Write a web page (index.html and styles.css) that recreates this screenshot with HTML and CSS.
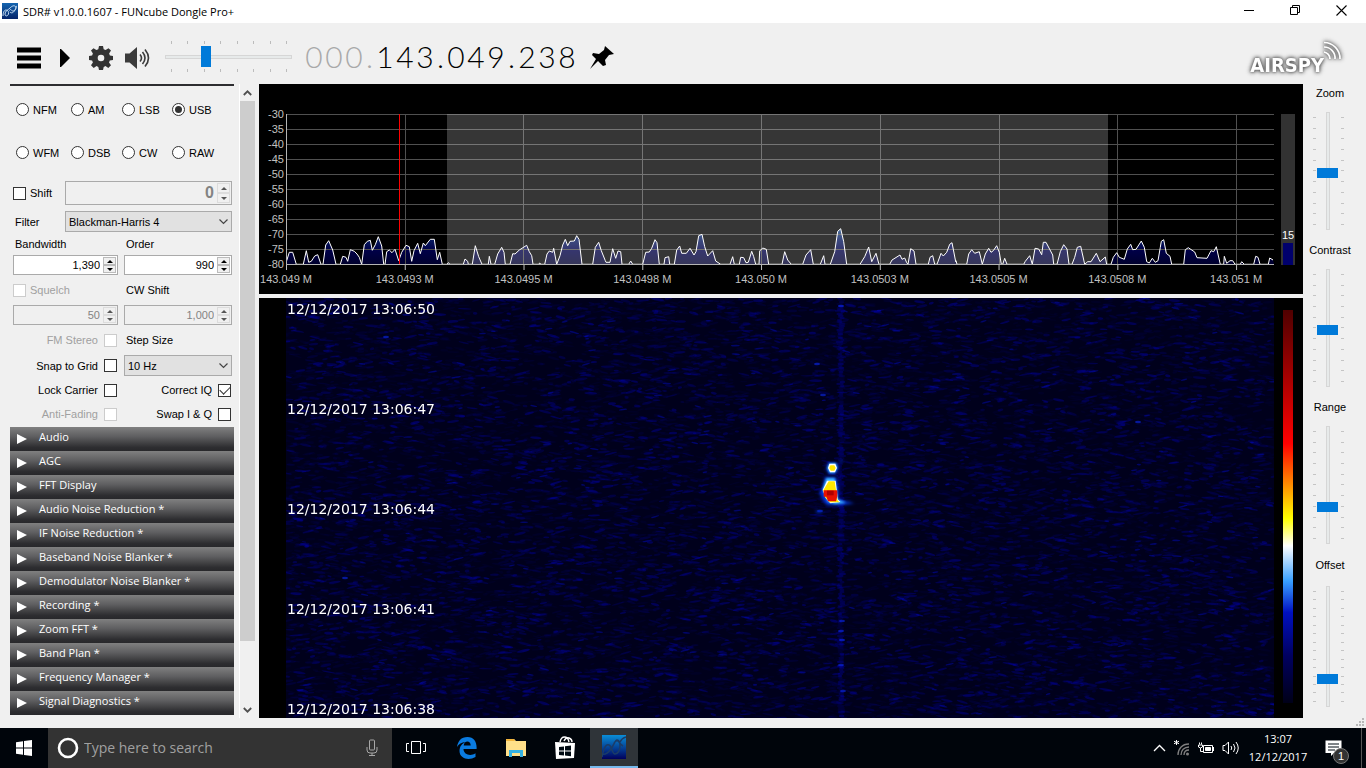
FILE: index.html
```html
<!DOCTYPE html>
<html lang="en">
<head>
<meta charset="utf-8">
<title>SDR# v1.0.0.1607 - FUNcube Dongle Pro+</title>
<link rel="stylesheet" href="styles.css">
</head>
<body>
<header class="titlebar">
  <svg class="app-icon" width="16" height="16" viewBox="0 0 16 16" aria-hidden="true"><defs><linearGradient id="ai" x2="0" y2="1"><stop offset="0" stop-color="#1565b0"/><stop offset="1" stop-color="#04246a"/></linearGradient></defs><rect width="16" height="16" fill="url(#ai)"/><path d="M1 13C1 10 2 7 4 7s3 2 2.500 4S3 14 3 11s3-4 5-6 4-3 5.500-1.500S13 8 11 8 9 5 7.500 7.500M8 9c2 2 4 0 5-2s1-4 2-4" fill="none" stroke="#c8dff5"/></svg>
  <h1 class="title">SDR# v1.0.0.1607 - FUNcube Dongle Pro+</h1>
  <button class="win-btn" aria-label="Minimize"><svg width="11" height="11" viewBox="0 0 11 11"><path d="M0 5.500h10" stroke="#000"/></svg></button>
  <button class="win-btn" aria-label="Restore"><svg width="11" height="11" viewBox="0 0 11 11"><path d="M.5 2.500h7v7h-7zM2.500 2.500v-2h7v7h-2" fill="none" stroke="#000"/></svg></button>
  <button class="win-btn" aria-label="Close"><svg width="11" height="11" viewBox="0 0 11 11"><path d="M.5.5l10 10M10.500.5l-10 10" stroke="#000" stroke-width="1.100"/></svg></button>
</header>

<div class="toolbar">
  <button class="tool" aria-label="Menu"><svg width="24" height="22" viewBox="0 0 24 22"><path d="M0 3h24M0 11h24M0 19h24" stroke="#000" stroke-width="5"/></svg></button>
  <button class="tool play" aria-label="Play"><svg width="10" height="18" viewBox="0 0 10 18"><path d="M0 0h1l9 9-9 9H0z"/></svg></button>
  <button class="tool gear" aria-label="Settings"><svg width="24" height="24" viewBox="-12 -12 24 24" fill="#333"><path fill-rule="evenodd" d="M-2-12h4l.7 3.300 1.900.8L7.500-9.800l2.500 2.400-1.900 3 .8 1.900L12-2v4l-3.200.6-.8 1.900L10 7.300 7.300 10 4.500 8.100l-1.800.8L2 12h-4l-.7-3.100-1.800-.8L-7.300 10-10 7.300-8.100 4.500l-.8-1.900L-12 2v-4l3.100-.5.8-1.900-1.900-3 2.500-2.400 2.900 1.900 1.900-.8zM0-3.300a3.300 3.300 0 1 0 0 6.600a3.300 3.300 0 1 0 0-6.600z"/></svg></button>
  <button class="tool" aria-label="Mute"><svg width="25" height="22" viewBox="0 0 25 22"><path d="M0 6.500h4.500L12 0v22l-7.500-6.500H0z" fill="#3b3b3b"/><path d="M15 7.500q3 3.500 0 7M17.500 5q5 6 0 12M20 2.500q7 8.500 0 17" fill="none" stroke="#3b3b3b" stroke-width="1.600"/></svg></button>
  <div class="volume">
    <div class="ticks-h" data-ticks="8"></div>
    <input class="range-h" type="range" min="0" max="100" value="30" aria-label="Volume">
    <div class="ticks-h" data-ticks="8"></div>
  </div>
  <div class="frequency" aria-label="Frequency"><span class="dim">0</span><span class="dim">0</span><span class="dim">0</span><span class="dim dot">.</span><span>1</span><span>4</span><span>3</span><span class="dot">.</span><span>0</span><span>4</span><span>9</span><span class="dot">.</span><span>2</span><span>3</span><span>8</span></div>
  <button class="tool pin" aria-label="Pin tuning"><svg width="25" height="24" viewBox="0 0 25 24"><path d="M15 0l9 8-5 1-4 5 1 5-3 1-5-5-8 8 6-10-4-4 1-2 6 1 5-4z"/></svg></button>
  <div class="logo"><span class="logo-text">AIRSPY</span><svg class="logo-waves" width="20" height="20" viewBox="0 0 20 20" fill="none" stroke="#fff" stroke-width="1.700"><path d="M2 11a7 7 0 0 1 6 7M2 6a11 11 0 0 1 11 12M2 1.500A16 16 0 0 1 18 18"/></svg></div>
</div>

<main class="workspace">
  <section class="side">
    <div class="panel">
      <form class="radio-form">
        <div class="modes">
          <label><input type="radio" name="mode">NFM</label><label><input type="radio" name="mode">AM</label><label><input type="radio" name="mode">LSB</label><label><input type="radio" name="mode" checked>USB</label>
          <label><input type="radio" name="mode">WFM</label><label><input type="radio" name="mode">DSB</label><label><input type="radio" name="mode">CW</label><label><input type="radio" name="mode">RAW</label>
        </div>
        <div class="wide-row">
          <label class="check"><input type="checkbox">Shift</label>
          <div class="spin off big"><input type="text" value="0" disabled aria-label="Shift value"><span class="arrows"><button type="button" disabled aria-label="Up"></button><button type="button" disabled aria-label="Down" class="down"></button></span></div>
        </div>
        <div class="wide-row">
          <label class="lead" for="filter">Filter</label>
          <div class="pick"><select id="filter"><option>Blackman-Harris 4</option></select><svg width="9" height="6" viewBox="0 0 9 6"><path d="M.5.5l4 4 4-4" fill="none" stroke="#444" stroke-width="1.200"/></svg></div>
        </div>
        <div class="pair h23"><label class="lead" for="bw">Bandwidth</label><label class="lead" for="order">Order</label></div>
        <div class="pair">
          <div class="spin"><input id="bw" type="text" value="1,390"><span class="arrows"><button type="button" aria-label="Up"></button><button type="button" aria-label="Down" class="down"></button></span></div>
          <div class="spin"><input id="order" type="text" value="990"><span class="arrows"><button type="button" aria-label="Up"></button><button type="button" aria-label="Down" class="down"></button></span></div>
        </div>
        <div class="pair h30"><label class="check off"><input type="checkbox" disabled>Squelch</label><label class="lead" for="cw">CW Shift</label></div>
        <div class="pair">
          <div class="spin off"><input type="text" value="50" disabled aria-label="Squelch level"><span class="arrows"><button type="button" disabled aria-label="Up"></button><button type="button" disabled aria-label="Down" class="down"></button></span></div>
          <div class="spin off"><input id="cw" type="text" value="1,000" disabled><span class="arrows"><button type="button" disabled aria-label="Up"></button><button type="button" disabled aria-label="Down" class="down"></button></span></div>
        </div>
        <div class="pair h30"><label class="check end off">FM Stereo<input type="checkbox" disabled></label><label class="lead" for="step">Step Size</label></div>
        <div class="pair">
          <label class="check end">Snap to Grid<input type="checkbox"></label>
          <div class="pick"><select id="step"><option>10 Hz</option></select><svg width="9" height="6" viewBox="0 0 9 6"><path d="M.5.5l4 4 4-4" fill="none" stroke="#444" stroke-width="1.200"/></svg></div>
        </div>
        <div class="pair h28"><label class="check end">Lock Carrier<input type="checkbox"></label><label class="check end">Correct IQ<input type="checkbox" checked></label></div>
        <div class="pair h20"><label class="check end off">Anti-Fading<input type="checkbox" disabled></label><label class="check end">Swap I &amp; Q<input type="checkbox"></label></div>
      </form>
      <div class="plugins">
        <button>Audio</button><button>AGC</button><button>FFT Display</button><button>Audio Noise Reduction *</button><button>IF Noise Reduction *</button><button>Baseband Noise Blanker *</button><button>Demodulator Noise Blanker *</button><button>Recording *</button><button>Zoom FFT *</button><button>Band Plan *</button><button>Frequency Manager *</button><button>Signal Diagnostics *</button>
      </div>
    </div>
    <div class="scroll">
      <button aria-label="Scroll up"><svg width="9" height="6" viewBox="0 0 9 6"><path d="M.8 5L4.500 1.300 8.200 5" fill="none" stroke="#505050" stroke-width="1.800"/></svg></button>
      <div class="scroll-track"><div class="scroll-thumb"></div></div>
      <button aria-label="Scroll down"><svg width="9" height="6" viewBox="0 0 9 6"><path d="M.8 1l3.700 3.700L8.200 1" fill="none" stroke="#505050" stroke-width="1.800"/></svg></button>
    </div>
  </section>

  <section class="displays">
    <div class="spectrum">
      <div class="db-scale"><span>-30</span><span>-35</span><span>-40</span><span>-45</span><span>-50</span><span>-55</span><span>-60</span><span>-65</span><span>-70</span><span>-75</span><span>-80</span></div>
      <svg class="plot" id="plot" viewBox="0 0 988 151" preserveAspectRatio="none" role="img" aria-label="Spectrum">
        <defs><linearGradient id="sky" gradientUnits="userSpaceOnUse" x1="0" y1="114" x2="0" y2="151"><stop offset="0" stop-color="#1d4f8c"/><stop offset=".3" stop-color="#081c60"/><stop offset=".6" stop-color="#000048"/><stop offset="1" stop-color="#00002c"/></linearGradient></defs>
        <path id="area" fill="url(#sky)"/>
        <path d="M0 .5H988M0 15.500H988M0 30.500H988M0 45.500H988M0 60.500H988M0 75.500H988M0 90.500H988M0 105.500H988M0 120.500H988M0 135.500H988M119.500 0V150M237.500 0V150M356.500 0V150M475.500 0V150M594.500 0V150M713.500 0V150M831.500 0V150M950.500 0V150" stroke="#505050" fill="none"/>
        <path d="M161 0H822V150H161z" fill="#fff" fill-opacity=".21"/>
        <path id="line" fill="none" stroke="#fff"/>
        <path d="M113.500 0V150" stroke="#f00"/>
        <path d="M.5 0V150M0 150.500H988" stroke="#b4b4b4" fill="none"/>
      </svg>
      <div class="meter"><span>15</span><div class="meter-fill"></div></div>
      <svg class="hz-scale" id="hz" aria-label="Frequency scale"></svg>
    </div>
    <div class="waterfall">
      <div class="fall">
        <canvas id="fall" width="988" height="420"></canvas>
        <div class="stamps"><time>12/12/2017 13:06:50</time><time>12/12/2017 13:06:47</time><time>12/12/2017 13:06:44</time><time>12/12/2017 13:06:41</time><time>12/12/2017 13:06:38</time></div>
      </div>
      <div class="palette"></div>
    </div>
  </section>

  <aside class="sliders">
    <div class="slider"><label for="zoom">Zoom</label><div class="vbox"><div class="ticks-v" data-ticks="11"></div><input id="zoom" class="range-v" type="range" value="48"><div class="ticks-v" data-ticks="11"></div></div></div>
    <div class="slider"><label for="contrast">Contrast</label><div class="vbox"><div class="ticks-v" data-ticks="11"></div><input id="contrast" class="range-v" type="range" value="48"><div class="ticks-v" data-ticks="11"></div></div></div>
    <div class="slider"><label for="range">Range</label><div class="vbox"><div class="ticks-v" data-ticks="11"></div><input id="range" class="range-v" type="range" value="29"><div class="ticks-v" data-ticks="11"></div></div></div>
    <div class="slider last"><label for="offset">Offset</label><div class="vbox"><div class="ticks-v" data-ticks="14"></div><input id="offset" class="range-v" type="range" value="20"><div class="ticks-v" data-ticks="14"></div></div></div>
    <svg class="grip" width="8" height="8" viewBox="0 0 8 8" fill="#b8b8b8"><path d="M6 0h2v2H6zM3 3h2v2H3zM6 3h2v2H6zM0 6h2v2H0zM3 6h2v2H3zM6 6h2v2H6z"/></svg>
  </aside>
</main>

<footer class="taskbar">
  <button class="task" aria-label="Start"><svg width="16" height="16" viewBox="0 0 16 16" fill="#fff"><path d="M0 2.300l7-1v6.200H0zM8 1.100L16 0v7.500H8zM0 8.500h7v6.200l-7-1zM8 8.500h8V16l-8-1.100z"/></svg></button>
  <div class="search">
    <svg width="22" height="22" viewBox="0 0 22 22"><circle cx="11" cy="11" r="9" fill="none" stroke="#fff" stroke-width="2.600"/></svg>
    <input type="text" placeholder="Type here to search" aria-label="Search">
    <svg width="12" height="18" viewBox="0 0 12 18" fill="none" stroke="#a8a8a8"><rect x="3.500" y="1" width="5" height="10" rx="1"/><path d="M1 8v3q0 3 3 3h4q3 0 3-3V8M6 14v3M3 16.500h6"/></svg>
  </div>
  <button class="task" aria-label="Task View"><svg width="20" height="14" viewBox="0 0 20 14" fill="none" stroke="#fff"><path d="M5.500.5h9v12h-9zM3 2.500H.5v8H3M17 2.500h2.500v8H17"/></svg></button>
  <button class="task edge" aria-label="Edge"><svg width="20" height="22" viewBox="0 0 20 22"><path fill="#0a7be0" d="M0 10C1 4 4 0 10.500 0 17 0 20 5 19.600 12H6.500c.2 6 7.500 7.500 12 4.200V20c-7 4-16 1.500-16-6 0-4.500 2.500-7.500 6-9C4.500 5.300 1.800 7 0 10zm6.700-1.500h7c0-5.500-6.500-5.300-7 0z"/></svg></button>
  <button class="task" aria-label="File Explorer"><svg width="22" height="20" viewBox="0 0 22 20"><path d="M1 1h8l2 2h10v15H1z" fill="#ffe08a"/><path d="M1 1h8l1 2H1z" fill="#f3b63d"/><path d="M4 19v-7h14v7h-3v-4H7v4z" fill="#35b1e1"/></svg></button>
  <button class="task" aria-label="Store"><svg width="22" height="24" viewBox="0 0 22 24"><path d="M6 6q1-5 4.500-5T15 6M10 5q2-4 5-3t3 4" fill="none" stroke="#fff" stroke-width="1.400"/><path d="M1 6l20 1-1 15-18 1z" fill="#fff"/><path d="M5 11l5-.6v4.200H5zM11 10.300l6-.7v5h-6zM5 15.600h5v4l-5-.6zM11 15.600h6v4.700l-6-.7z" fill="#000a12"/></svg></button>
  <button class="task active" aria-label="SDR#"><svg width="24" height="24" viewBox="0 0 24 24"><defs><linearGradient id="tb" x2="0" y2="1"><stop offset="0" stop-color="#0a8ed8"/><stop offset="1" stop-color="#00005c"/></linearGradient></defs><rect width="24" height="24" fill="url(#tb)"/><path d="M0 22C2 12 4 9 7 10s3 9 6 9 5-4 5-8-1-6-3-6-3 5-6 9-6 6-9 5M12 8q3-4 5-1t4 4M18 7q2-4 6-5" fill="none" stroke="#1b3c68" stroke-width="1.500"/></svg></button>
  <div class="tray">
    <svg width="13" height="8" viewBox="0 0 13 8"><path d="M1 7l5.500-5.500L12 7" fill="none" stroke="#fff" stroke-width="1.300"/></svg>
    <svg width="18" height="16" viewBox="0 0 18 16" fill="none"><path d="M3.500 0v5M1 1.200l5 2.600M6 1.200L1 3.800" stroke="#fff"/><path d="M5 15C5 9 9 4 16 4M8 15c0-4.500 3-8 8-8M11 15c0-3 2-5 5-5" stroke="#808080" stroke-width="1.300"/><circle cx="14.500" cy="14" r="1.500" fill="#808080"/></svg>
    <svg width="17" height="12" viewBox="0 0 17 12" fill="none" stroke="#fff"><path d="M5.500 3.500h9v7h-9z"/><path d="M7.500 5.500h5v3h-5z" fill="#fff"/><path d="M15.500 5v4M1.500.5v2M3.500.5v2M.5 3h4v2q-2 2-4 0zM2.500 6v3.500H5"/></svg>
    <svg width="17" height="14" viewBox="0 0 17 14" fill="none" stroke="#fff"><path d="M1 4.500h2L6.500 1v12L3 9.500H1z"/><path d="M9 5q1.500 2 0 4M11.500 3q3 4 0 8M14 1q4.500 6 0 12"/></svg>
    <div class="clock"><span>13:07</span><span>12/12/2017</span></div>
    <button class="notes" aria-label="Notifications"><svg width="17" height="17" viewBox="0 0 17 17"><path d="M.5.500h16V13H9l-3 3v-3H.5z" fill="#fff"/><path d="M3 4h11M3 7h11M3 10h7" stroke="#000a12"/></svg><span class="badge">1</span></button>
  </div>
</footer>
<script src="app.js"></script>
</body>
</html>
```
FILE: styles.css
```css
* { box-sizing: border-box; }
html, body { height: 100%; }
body {
  margin: 0;
  display: flex;
  flex-direction: column;
  overflow: hidden;
  background: #f0f0f0;
  color: #000;
  font: 11px/14px "Liberation Sans", Arial, sans-serif;
}
button { border: 0; padding: 0; background: none; font: inherit; color: inherit; }
svg { display: block; flex: none; }

.titlebar { display: flex; align-items: stretch; height: 23px; padding-right: 2px; background: #fff; }
.app-icon { margin: 3px 5px 0 2px; }
.title { flex: 1; margin: 0; font: 11px/23px "Open Sans", "Noto Sans", sans-serif; }
.win-btn { width: 46px; display: flex; justify-content: center; align-items: center; padding-bottom: 2px; }

.toolbar { display: flex; align-items: center; height: 61px; padding: 0 24px 0 17px; }
.tool { display: flex; margin-top: 9px; }
.play { margin-left: 19px; }
.gear { margin-left: 19px; margin-right: 12px; }
.volume { width: 127px; margin: 6px 0 0 15px; }
.ticks-h { display: flex; justify-content: space-between; height: 3px; padding: 0 5px 0 6px; }
.ticks-h i { width: 1px; background: #bcbcbc; }
.frequency { display: flex; margin-left: 12px; margin-top: 5px; font: 300 30px/40px Lato, "Open Sans", sans-serif; }
.frequency span { width: 20px; text-align: center; }
.frequency .dot { width: 11px; }
.frequency .dim { color: #a9a9a9; }
.pin { margin-left: 13px; }
.logo { display: flex; margin-left: auto; height: 34px; margin-top: 9px; filter: drop-shadow(0 0 2px #555) drop-shadow(0 0 1px #777); }
.logo-text { align-self: flex-end; color: #fff; font: bold 20px/20px "DejaVu Sans Condensed", "DejaVu Sans", sans-serif; }
.logo-waves { margin-left: -2px; }

input[type="range"] { appearance: none; background: none; margin: 0; }
.range-h { display: block; width: 100%; height: 25px; }
.range-h::-webkit-slider-runnable-track { height: 4px; background: #e7eaea; border: 1px solid #d6d6d6; }
.range-h::-webkit-slider-thumb { appearance: none; width: 10px; height: 21px; margin-top: -10px; background: #007ad9; }

.workspace { flex: 1; min-height: 0; display: grid; grid-template-columns: 259px 1fr 63px; padding-bottom: 10px; }
.side { display: flex; min-height: 0; min-width: 0; }
.panel { flex: none; width: 224px; margin: 0 5px 0 10px; border-top: 2px solid #2d2d30; }
.radio-form { padding: 2px 2px 0 3px; }
.modes { display: grid; grid-template-columns: 55px 51px 50px 1fr; padding-left: 3px; margin-bottom: 7px; }
.modes label { display: flex; align-items: center; height: 43px; gap: 4px; }
input[type="radio"], input[type="checkbox"] { appearance: none; flex: none; width: 13px; height: 13px; margin: 0; background: #fff; border: 1px solid #333; display: grid; place-items: center; }
input[type="radio"] { border-radius: 50%; }
input[type="radio"]:checked::before { content: ""; width: 7px; height: 7px; border-radius: 50%; background: #333; }
input[type="checkbox"]:checked::before { content: ""; width: 9px; height: 5px; margin-top: -3px; border: solid #333; border-width: 0 0 1px 1px; rotate: -45deg; }
input[type="checkbox"]:disabled { border-color: #ccc; }
.check { display: flex; align-items: center; gap: 4px; }
.check.end { justify-content: flex-end; gap: 6px; padding-right: 1px; }
.check.off { color: #a0a0a0; }
.lead { align-self: center; padding-left: 2px; }
.wide-row { display: grid; grid-template-columns: 52px minmax(0, 1fr); margin-bottom: 6px; }
.wide-row + .pair { margin-top: -6px; }
.pair { display: grid; grid-template-columns: 105px minmax(0, 1fr); gap: 6px; align-items: center; }
.h20 { height: 20px; }
.h23 { height: 23px; }
.h28 { height: 28px; }
.h30 { height: 30px; }

.spin { display: flex; height: 20px; padding: 1px; background: #fff; border: 1px solid #aaa; }
.spin input { flex: 1; min-width: 0; border: 0; padding: 0 3px 0 0; background: none; text-align: right; color: #000; font: inherit; }
.spin.off { background: #f0f0f0; }
.spin.off input { color: #838383; }
.spin.big { height: 24px; }
.spin.big input { font-size: 16px; font-weight: bold; }
.arrows { flex: none; display: flex; flex-direction: column; width: 13px; }
.arrows button { flex: 1; display: grid; place-items: center; border: 1px solid #bbb; background: #f0f0f0; }
.arrows button::before { content: ""; border: 3px solid transparent; border-top: 0; border-bottom-color: #000; }
.arrows .down::before { rotate: 180deg; }
.off .arrows button { border-color: #dcdcdc; }
.off .arrows button::before { border-bottom-color: #555; }

.pick { position: relative; }
.pick select { appearance: none; display: block; width: 100%; height: 21px; padding: 0 3px; border: 1px solid #aaa; border-radius: 0; background: #e1e1e1; color: #000; font: inherit; }
.pick svg { position: absolute; right: 4px; top: 8px; pointer-events: none; }

.plugins { margin-top: 3px; }
.plugins button {
  display: flex;
  align-items: center;
  width: 100%;
  height: 24px;
  padding: 0 0 5px 7px;
  color: #fff;
  font: 11px/18px "Open Sans", "Noto Sans", sans-serif;
  background: linear-gradient(#808080, #5e5e60 40%, #2d2d30 85%, #28282b);
}
.plugins button::before { content: ""; margin: 5px 12px 0 0; border: solid transparent; border-width: 5px 0 5px 10px; border-left-color: #fff; }

.scroll { display: flex; flex-direction: column; width: 16px; border-left: 1px solid #fff; }
.scroll button { display: grid; place-items: center; height: 17px; }
.scroll-track { flex: 1; }
.scroll-thumb { height: 90%; background: #cdcdcd; }

.displays { display: grid; grid-template-rows: 210px 1fr; gap: 4px; min-width: 0; min-height: 0; }
.spectrum { display: grid; grid-template-columns: 27px 1fr 29px; grid-template-rows: 151px 29px; padding-top: 30px; background: #000; color: #c0c0c0; }
.db-scale { display: flex; flex-direction: column; justify-content: space-between; height: 164px; margin-top: -7px; padding-right: 2px; text-align: right; }
.plot { width: 100%; height: 100%; }
.meter { display: flex; flex-direction: column; justify-content: flex-end; align-items: center; width: 14px; margin-left: 7px; background: #323232; color: #fff; }
.meter-fill { width: 10px; height: 22px; margin-top: 1px; background: #00006c; }
.hz-scale { grid-column: 2; width: 100%; height: 29px; overflow: visible; fill: #c0c0c0; }

.waterfall { display: flex; min-height: 0; padding-left: 27px; background: #000; }
.fall { flex: 1; position: relative; min-width: 0; }
.fall canvas { position: absolute; inset: 0; width: 100%; height: 100%; }
.stamps { position: absolute; inset: 4px auto 2px 1px; display: flex; flex-direction: column; justify-content: space-between; color: #fff; font: 14px/14px "DejaVu Sans", Verdana, sans-serif; }
.palette { width: 10px; margin: 12px 10px 15px 9px; background: linear-gradient(#500000, #a00000 16%, #f00 34%, #ff0 53%, #fff 60%, #38a0ff 69%, #0010c0 77%, #000060 88%, #000018); }

.sliders { display: grid; grid-template-rows: repeat(3, 157px) 1fr; position: relative; }
.slider { display: flex; flex-direction: column; align-items: center; padding: 2px 13px 0 0; }
.slider label { margin-left: 4px; }
.vbox { display: flex; height: 118px; margin-top: 12px; }
.last { padding-top: 3px; }
.last .vbox { height: 121px; margin-top: 14px; }
.ticks-v { display: flex; flex-direction: column; justify-content: space-between; width: 3px; padding: 5px 0; }
.ticks-v i { height: 1px; background: #c4c4c4; }
.range-v { writing-mode: vertical-lr; direction: rtl; width: 25px; height: 100%; }
.range-v::-webkit-slider-runnable-track { width: 4px; background: #e7eaea; border: 1px solid #d6d6d6; }
.range-v::-webkit-slider-thumb { appearance: none; width: 21px; height: 10px; margin-left: -10px; background: #007ad9; }
.grip { position: absolute; right: 2px; bottom: -8px; }

.taskbar { display: flex; height: 40px; background: #00050b; color: #fff; }
.task { width: 48px; display: grid; place-items: center; margin-right: 1px; }
.task:first-child { margin-right: 0; }
.search { display: flex; align-items: center; width: 344px; padding: 0 14px 0 9px; gap: 5px; background: #333; }
.search input { flex: 1; min-width: 0; padding: 0; border: 0; background: none; color: #fff; font: 14px/20px "Open Sans", "Noto Sans", sans-serif; }
.search input::placeholder { color: #a0a0a0; opacity: 1; }
.edge { margin-left: 2px; }
.active { background: #2f3439; border-bottom: 2px solid #76b9ed; }
.tray { display: flex; align-items: center; gap: 7px; margin-left: auto; margin-right: 4px; padding-right: 12px; border-right: 1px solid #555; }
.clock { display: flex; flex-direction: column; width: 60px; margin-left: 2px; text-align: center; font: 11px/18px "Open Sans", "Noto Sans", sans-serif; }
.notes { position: relative; margin-left: 10px; margin-right: 7px; }
.badge { position: absolute; left: 8px; top: 8px; width: 16px; height: 16px; border: 1px solid #777; border-radius: 50%; background: #333; font-size: 11px; line-height: 14px; text-align: center; }
```
FILE: app.js
```js
// Slider tick marks
document.querySelectorAll('[data-ticks]').forEach(function (box) {
  for (let i = 0; i < Number(box.dataset.ticks); i++) box.appendChild(document.createElement('i'));
});

// Spectrum samples, three to a plot unit; each run has its own origin
const runs = [
  { x: -30, y: -30, pts: '92,530 100,505 110,505 121,541 142,541 151,500 158,535 166,532 176,516 185,512 195,541 201,541 209,483 218,470 230,498 240,541 253,541 260,517 270,520 275,532 283,497 295,502 303,510 310,520 317,541 325,482 334,472 343,469 349,499 358,482 367,458 377,486 383,541 387,541 392,503 400,498 408,506 417,496 428,530 437,505 450,484 460,488 467,532 474,500 485,478 493,509 502,477 508,485 523,466 535,466 544,527 551,505 559,541 573,541 577,536 582,541 622,541 627,525 635,532 637,541 649,541 658,485 668,518 678,541 697,541 700,517 705,541 716,541 725,510 737,490 744,505 748,541 762,541 770,509 777,510 790,498 812,484 820,503 827,515 831,541 848,541 851,537 855,541 866,541 873,510 880,501 890,505 893,493 902,541 912,515 920,483 928,466 935,485 942,472 955,471 962,455 969,466 978,541 1010,541 1018,490 1028,475 1036,500 1048,530' },
  { x: 320, y: 86, pts: '0,187 12,187 20,146 29,175 36,153 44,155 48,193 68,193 74,183 80,193 110,193 119,157 130,156 137,145 147,119 153,128 160,193 174,193 177,173 188,170 191,193 205,193 212,150 221,138 227,160 241,160 252,145 264,165 270,155 278,107 288,103 296,140 305,168 320,152 329,183 344,193 372,193 380,170 385,193 400,193 404,172 413,173 420,188 427,187 437,154 443,170 449,193 459,193 461,153 470,144 481,148 488,193 528,193 536,155 545,180 556,193 590,193 600,165 614,149 622,193 643,193 653,167 657,193 673,193 686,155 695,94 704,86 713,125 722,193 762,193 776,170 788,141 797,185 810,160 819,193 851,193 858,180 882,165 888,178 896,174 902,188 906,193 914,146 924,153 930,193 967,193 972,172 980,167 986,193 993,193 1005,160 1012,168 1022,157 1031,133 1038,128 1049,185' },
  { x: 670, y: -30, pts: '0,530 3,541 32,541 38,510 47,497 56,508 70,503 79,541 88,510 98,493 105,505 112,500 122,485 130,505 136,541 140,541 146,523 153,541 203,541 208,532 221,515 229,541 237,493 248,495 257,512 262,475 270,475 290,513 293,541 303,541 313,503 323,482 333,495 339,541 348,541 356,520 364,490 374,487 386,541 395,533 405,533 421,508 432,533 448,519 452,541 465,541 472,520 482,506 490,520 505,526 514,495 524,481 530,497 540,496 556,471 565,490 572,533 580,537 589,523 598,535 606,530 613,490 616,472 623,467 631,508 642,517 647,541 683,541 688,497 697,491 716,504 723,521 753,523 765,500 773,503 781,488 793,541 803,541 805,517 812,538 822,530 830,530 837,541 853,541 857,533 865,541 893,541 899,517 906,520 912,541 937,541 941,522 951,528' }
];
const points = runs.flatMap(function (run) {
  return run.pts.split(' ').map(function (pair) {
    const p = pair.split(',').map(Number);
    return (p[0] / 3 + run.x).toFixed(1) + ' ' + (p[1] / 3 + run.y).toFixed(1);
  });
});
document.getElementById('line').setAttribute('d', 'M' + points.join('L'));
document.getElementById('area').setAttribute('d', 'M0 150L' + points.join('L') + 'L988 150Z');

// Frequency axis
const NS = 'http://www.w3.org/2000/svg';
const hz = document.getElementById('hz');
['143.049 M', '143.0493 M', '143.0495 M', '143.0498 M', '143.050 M', '143.0503 M', '143.0505 M', '143.0508 M', '143.051 M'].forEach(function (label, i) {
  const at = i * 12.02 + '%';
  const text = document.createElementNS(NS, 'text');
  text.setAttribute('x', at);
  text.setAttribute('y', 18);
  text.setAttribute('text-anchor', 'middle');
  text.textContent = label;
  const tick = document.createElementNS(NS, 'rect');
  tick.setAttribute('x', at);
  tick.setAttribute('width', 1);
  tick.setAttribute('height', 5);
  hz.append(tick, text);
});

// Waterfall: noise streaks, the carrier trace and the echo
const ctx = document.getElementById('fall').getContext('2d');
let seed = 1607;
function rnd() {
  seed = (seed * 1664525 + 1013904223) % 4294967296;
  return seed / 4294967296;
}
function streak(x, y, w, h, tilt, color) {
  ctx.fillStyle = color;
  ctx.beginPath();
  ctx.ellipse(x, y, w, h, tilt, 0, Math.PI * 2);
  ctx.fill();
}
ctx.fillStyle = '#00001c';
ctx.fillRect(0, 0, 988, 420);
for (let i = 0; i < 15000; i++) {
  const a = 0.06 + 0.36 * Math.pow(rnd(), 3);
  streak(rnd() * 988, rnd() * 420, 2 + rnd() * 5, 0.7 + rnd() * 0.7, (rnd() - 0.5) * 0.6, 'rgba(0,0,170,' + a + ')');
}
for (let i = 0; i < 250; i++) streak(rnd() * 988, rnd() * 420, 2 + rnd() * 3, 0.8, (rnd() - 0.5) * 0.6, 'rgba(0,10,200,.45)');
for (let y = 0; y < 420; y += 2) {
  streak(555 + (rnd() - 0.5) * 3, y, 2 + rnd() * 2, 1.2, 0, 'rgba(0,0,190,' + (0.1 + rnd() * 0.3) + ')');
}
[[555, 8], [555, 333], [556, 342], [555, 367], [557, 393], [556, 323], [531, 66], [537, 97], [852, 124], [100, 39], [534, 213], [59, 280]].forEach(function (p) {
  streak(p[0], p[1], 3, 1.2, 0, 'rgba(10,40,240,.6)');
});

ctx.translate(494, 142);
ctx.scale(1 / 3, 1 / 3);
function layer(color, blur, shapes) {
  ctx.filter = 'blur(' + blur + 'px)';
  ctx.fillStyle = color;
  shapes.forEach(function (d) { ctx.fill(new Path2D(d)); });
}
layer('#0030d0', 1.5, ['M138 84l8-16h24l6 16-8 18h-22z', 'M134 112h36l6 36-2 30 50 12-40 6h-44l-14-20-8-18 10-16z', 'M172 68l16-8v6z', 'M105 212h18l8 5-20 2z']);
layer('#40b8ff', 1, ['M142 84l6-14h20l4 14-8 14h-16z', 'M139 114h25l6 36 3 28 25 10-32 4-22-6-16-38z']);
layer('#ffffff', 0.5, ['M144 84l4-13h18l5 13-6 13h-15z', 'M141 122h26l3 26 3 30 8 8-30 4-14-16-9-24z']);
layer('#ffe800', 0.5, ['M148 84l3-8h12l4 8-4 8h-11z', 'M146 124h18l4 26 4 30 6 7h-28l-13-14-7-22z']);
layer('#e81000', 0.3, ['M131 151h41v18l-4 15h-24l-5-14h-8z']);
layer('#b00000', 0.3, ['M141 152h20v14h-20z']);
```
